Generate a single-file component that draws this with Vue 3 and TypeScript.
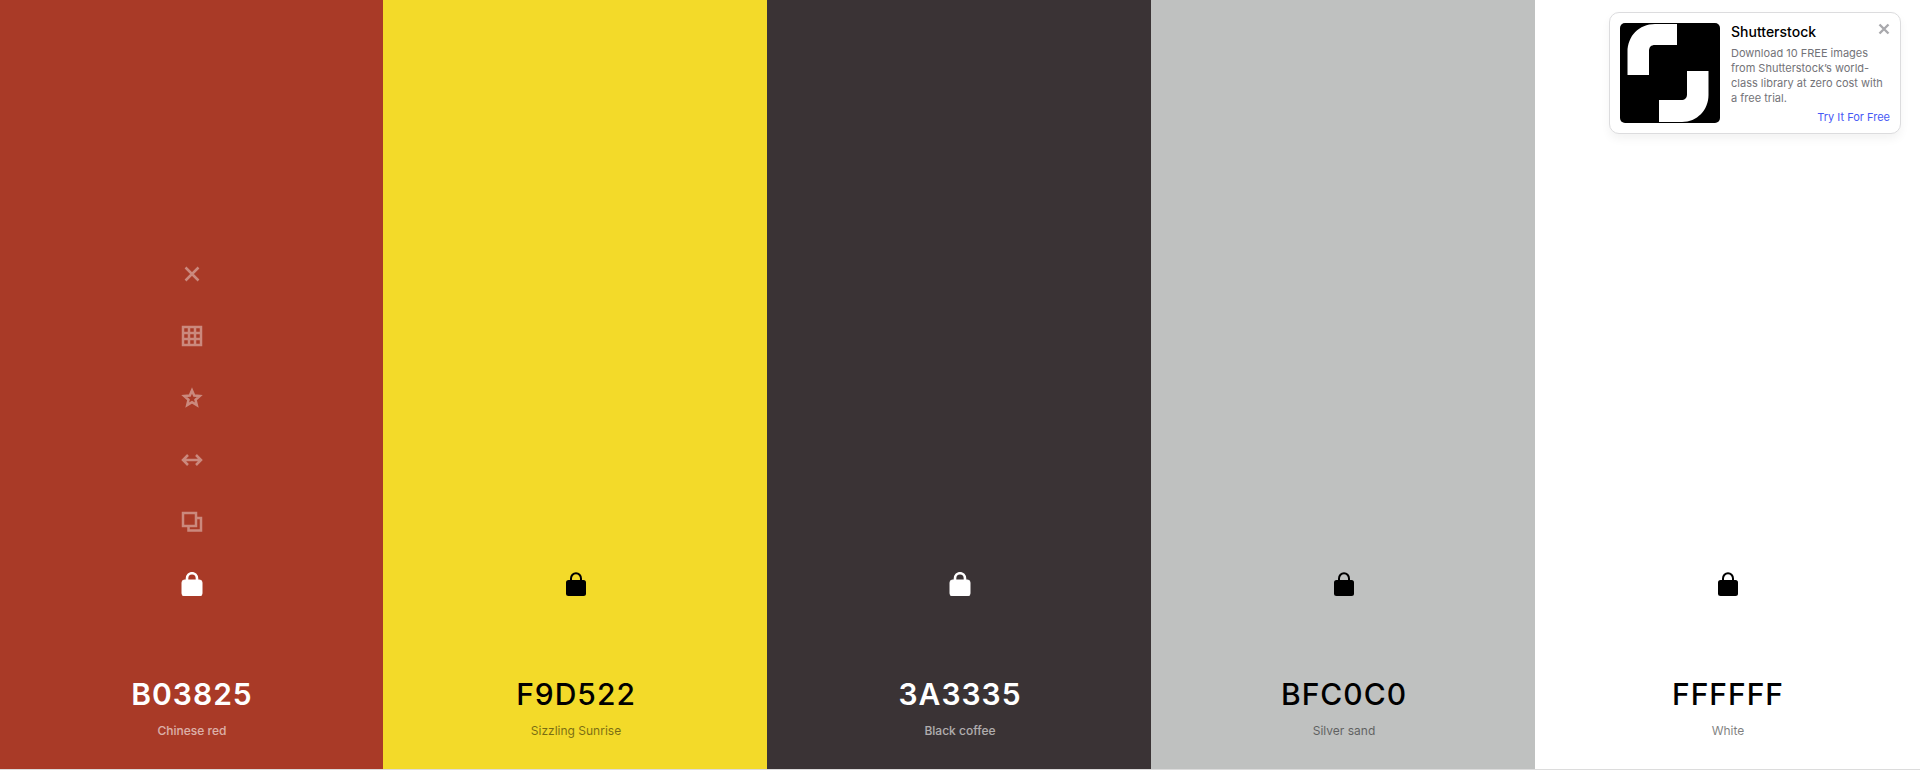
<script setup lang="ts">
import { ref } from 'vue'

interface Swatch {
  hex: string
  name: string
  tone: string
  dark: boolean
  tools: boolean
}

const swatches: Swatch[] = [
  { hex: 'B03825', name: 'Chinese red', tone: 'red', dark: true, tools: true },
  { hex: 'F9D522', name: 'Sizzling Sunrise', tone: 'yellow', dark: false, tools: false },
  { hex: '3A3335', name: 'Black coffee', tone: 'coffee', dark: true, tools: false },
  { hex: 'BFC0C0', name: 'Silver sand', tone: 'silver', dark: false, tools: false },
  { hex: 'FFFFFF', name: 'White', tone: 'white', dark: false, tools: false },
]

const tools = [
  { label: 'Remove color', d: 'M5.500 5.500l13 13M18.500 5.500l-13 13' },
  { label: 'View shades', d: 'M3 3h18v18H3zM9 3v18M15 3v18M3 9h18M3 15h18' },
  { label: 'Save color', d: 'M12 4.500l2.200 5.100 5.500.5-4.200 3.600 1.300 5.400-4.800-2.900-4.800 2.900 1.300-5.400-4.200-3.600 5.500-.5z' },
  { label: 'Drag color', d: 'M3.500 12h17M8 7l-5 5 5 5M16 7l5 5-5 5' },
  { label: 'Copy HEX', d: 'M3 3h13v13H3zM16 8h5v12.500H8.500V16' },
]

const adOpen = ref(true)
</script>

<template>
  <main class="palette">
    <section
      v-for="s in swatches"
      :key="s.hex"
      class="swatch"
      :class="[s.tone, s.dark ? 'on-dark' : 'on-light']"
    >
      <template v-if="s.tools">
        <button v-for="t in tools" :key="t.label" class="tool faded" type="button" :aria-label="t.label">
          <svg viewBox="0 0 24 24" width="24" height="24"><path :d="t.d" /></svg>
        </button>
      </template>
      <button class="tool" type="button" aria-label="Toggle lock">
        <svg class="lock" viewBox="0 0 24 24" width="24" height="24">
          <path class="shackle" d="M7 9V6.500a5 5.300 0 0 1 10 0V9" />
          <rect class="body" x="2" y="8" width="20" height="16" rx="2.500" />
        </svg>
      </button>
      <button class="hex" type="button">{{ s.hex }}</button>
      <button class="name" type="button">{{ s.name }}</button>
    </section>

    <aside v-if="adOpen" class="ad">
      <svg class="logo" viewBox="0 0 100 100" role="img" aria-label="Shutterstock logo">
        <rect width="100" height="100" fill="#000" />
        <path
          fill="#fff"
          d="M57 1H35C19 1 7.500 13 7.500 29v23H29V28c0-4 2-6 6-6h22zM67 48h21.500v24c0 15-11.500 27-26.500 27H39V77h22c4 0 6-2 6-6z"
        />
      </svg>
      <div class="copy">
        <h2>Shutterstock</h2>
        <p>Download 10 FREE images from Shutterstock’s world-class library at zero cost with a free trial.</p>
        <a href="#">Try It For Free</a>
      </div>
      <button class="close" type="button" aria-label="Close ad" @click="adOpen = false">
        <svg viewBox="0 0 12 12" width="12" height="12"><path d="M1.500 1.500l9 9M10.500 1.500l-9 9" /></svg>
      </button>
    </aside>
  </main>
</template>

<style>
body {
  margin: 0;
  font-family: Inter, "Liberation Sans", sans-serif;
}
</style>

<style scoped>
.palette {
  position: relative;
  box-sizing: border-box;
  display: grid;
  grid-template-columns: calc(20% - 1px) repeat(3, 20%) 1fr;
  height: 100vh;
  border-bottom: 1px solid #dcdcdc;
}
.swatch {
  box-sizing: border-box;
  display: flex;
  flex-direction: column;
  align-items: center;
  justify-content: flex-end;
  padding: 0 0 28px 2px;
}
.swatch:first-child { padding-left: 1px; }
.red { background: #a93a27; }
.yellow { background: #f3da29; }
.coffee { background: #3a3335; }
.silver { background: #bfc1c0; }
.white { background: #fff; padding-left: 1px; }
.on-dark { color: #fff; }
.on-light { color: #000; }
button {
  padding: 0;
  border: 0;
  background: none;
  color: inherit;
  font: inherit;
  cursor: pointer;
}
svg { display: block; }
.tool {
  display: flex;
  align-items: center;
  justify-content: center;
  width: 62px;
  height: 62px;
}
.tool path {
  fill: none;
  stroke: currentColor;
  stroke-width: 2;
}
.faded { opacity: 0.4; }
.faded path { stroke-width: 2.5; }
.lock .body { fill: currentColor; }
.on-dark .lock .shackle { stroke-width: 2.6; }
.on-dark .lock .body { stroke: currentColor; stroke-width: 1; }
.hex {
  margin-top: 59px;
  font-size: 30px;
  font-weight: 500;
  line-height: 40px;
  letter-spacing: 1px;
}
.on-dark .hex { font-weight: 600; }
.name {
  margin-top: 7px;
  font-size: 12px;
  line-height: 20px;
  opacity: 0.5;
}
.on-dark .name { font-weight: 500; opacity: 0.6; }
.ad {
  position: absolute;
  top: 12px;
  right: 19px;
  box-sizing: border-box;
  display: flex;
  gap: 11px;
  width: 292px;
  padding: 10px 10px 9px;
  border: 1px solid #dcdcde;
  border-radius: 10px;
  background: #fff;
  box-shadow: 0 5px 10px rgba(0, 0, 0, 0.05);
}
.logo {
  flex: none;
  width: 100px;
  height: 100px;
  border-radius: 5px;
}
.copy {
  flex: 1;
  display: flex;
  flex-direction: column;
}
.copy h2 {
  margin: 0;
  font-size: 14px;
  font-weight: 500;
  line-height: 18px;
  color: #000;
}
.copy p {
  margin: 5px 0 0;
  font-size: 11px;
  line-height: 15px;
  color: #737378;
}
.copy a {
  align-self: flex-end;
  margin-top: 4px;
  font-size: 11px;
  line-height: 14px;
  color: #4759f5;
  text-decoration: none;
}
.close {
  position: absolute;
  top: 10px;
  right: 10px;
  color: #a9a9ad;
}
.close path {
  fill: none;
  stroke: currentColor;
  stroke-width: 2.4;
}
</style>
